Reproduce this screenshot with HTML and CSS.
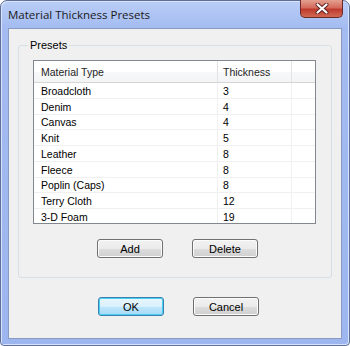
FILE: index.html
```html
<!DOCTYPE html>
<html>
<head>
  <title>Material Thickness Presets</title>
  <link rel="stylesheet" href="styles.css">
</head>
<body>

<div class="window">
  <div class="titlebar">
    <span class="title">Material Thickness Presets</span>
    <div class="close">
      <svg width="14" height="11" viewBox="0 0 14 11">
        <path d="M2.5 1.5 L11.5 9.5 M11.5 1.5 L2.5 9.5" stroke="#5a2020" stroke-width="4" stroke-linecap="round"/>
        <path d="M2.5 1.5 L11.5 9.5 M11.5 1.5 L2.5 9.5" stroke="#ffffff" stroke-width="2.2" stroke-linecap="round"/>
      </svg>
    </div>
  </div>

  <div class="client">
    <fieldset class="group">
      <legend>Presets</legend>

      <div class="list">
        <div class="row head">
          <div class="cell">Material Type</div>
          <div class="cell">Thickness</div>
          <div class="cell"></div>
        </div>
        <div class="row"><div class="cell">Broadcloth</div><div class="cell">3</div><div class="cell"></div></div>
        <div class="row"><div class="cell">Denim</div><div class="cell">4</div><div class="cell"></div></div>
        <div class="row"><div class="cell">Canvas</div><div class="cell">4</div><div class="cell"></div></div>
        <div class="row"><div class="cell">Knit</div><div class="cell">5</div><div class="cell"></div></div>
        <div class="row"><div class="cell">Leather</div><div class="cell">8</div><div class="cell"></div></div>
        <div class="row"><div class="cell">Fleece</div><div class="cell">8</div><div class="cell"></div></div>
        <div class="row"><div class="cell">Poplin (Caps)</div><div class="cell">8</div><div class="cell"></div></div>
        <div class="row"><div class="cell">Terry Cloth</div><div class="cell">12</div><div class="cell"></div></div>
        <div class="row"><div class="cell">3-D Foam</div><div class="cell">19</div><div class="cell"></div></div>
      </div>

      <div class="buttons">
        <button class="btn">Add</button>
        <button class="btn">Delete</button>
      </div>
    </fieldset>

    <div class="buttons bottom">
      <button class="btn default">OK</button>
      <button class="btn">Cancel</button>
    </div>
  </div>
</div>

</body>
</html>
```

FILE: styles.css
```css
body{
margin: 0;
background-color: #ffffff;
font-family: "Liberation Sans", Arial, sans-serif;
font-size: 10px;
color: #000000;
}
.window{
width: 350px;
height: 346px;
box-sizing: border-box;
padding: 0 7px 6px 7px;
display: flex;
flex-direction: column;
border: 1px solid #5f6f99;
border-radius: 7px 7px 4px 4px;
background: linear-gradient(180deg, #b9cdf6 0px, #a3bbf1 28px, #9db6ef 100%);
box-shadow: inset 1px 1px 0 #d8e4fb, inset -1px -1px 0 #d8e4fb;
}
.titlebar{
height: 27px;
display: flex;
justify-content: space-between;
align-items: flex-start;
}
.title{
margin-top: 6px;
font-family: "Open Sans", "Liberation Sans", sans-serif;
font-size: 11.5px;
color: #1a1a1a;
}
.close{
width: 43px;
height: 18px;
margin-top: -1px;
margin-right: -1px;
box-sizing: border-box;
border: 1px solid #6b2a2a;
border-top: none;
border-radius: 0 0 5px 5px;
background: linear-gradient(180deg, #e4a090 0%, #d46a5c 45%, #bf3a2c 55%, #d06a52 100%);
display: flex;
justify-content: center;
align-items: center;
}
.client{
flex: 1;
background-color: #f0f0f0;
border: 1px solid #8a9bc2;
display: flex;
flex-direction: column;
padding: 10px 9px 0 9px;
}
.group{
margin: 0;
padding: 9px 15px 17px 14px;
border: 1px solid #d5dfe5;
border-radius: 3px;
height: 239px;
box-sizing: border-box;
}
.group legend{
padding: 0 2px;
margin-left: -5px;
font-size: 11px;
color: #000000;
}
.list{
height: 164px;
box-sizing: border-box;
background-color: #ffffff;
border: 1px solid #828790;
overflow: hidden;
}
.row{
display: grid;
grid-template-columns: 184px 74px 1fr;
height: 15.75px;
box-sizing: border-box;
border-bottom: 1px solid #f0f0f0;
align-items: center;
font-size: 10.5px;
}
.row .cell{
padding-left: 7px;
padding-top: 1px;
box-sizing: border-box;
border-right: 1px solid #f0f0f0;
height: 100%;
display: flex;
align-items: center;
}
.row .cell:nth-child(2){
padding-left: 5px;
}
.row.head{
height: 22px;
background: linear-gradient(180deg, #ffffff 0%, #ffffff 50%, #f7f8fa 51%, #f3f4f6 100%);
border-bottom: 1px solid #d5d5d5;
color: #1e1e1e;
}
.row.head .cell{
border-right: 1px solid #e2e3e5;
}
.row .cell:last-child{
border-right: none;
}
.buttons{
display: flex;
gap: 29px;
padding-left: 64px;
margin-top: 15px;
}
.buttons.bottom{
padding-left: 80px;
margin-top: 19px;
}
.btn{
width: 66px;
height: 19px;
padding: 0;
font-family: "Liberation Sans", Arial, sans-serif;
font-size: 11px;
color: #000000;
border: 1px solid #707070;
border-radius: 3px;
background: linear-gradient(180deg, #f2f2f2 0%, #ebebeb 50%, #dddddd 51%, #cfcfcf 100%);
box-shadow: inset 0 0 0 1px #fcfcfc;
}
.btn.default{
border: 1px solid #3c7fb1;
background: linear-gradient(180deg, #eaf6fd 0%, #d9f0fc 50%, #bee6fd 51%, #a7d9f5 100%);
box-shadow: inset 0 0 0 1px #48d0f0;
}
```
